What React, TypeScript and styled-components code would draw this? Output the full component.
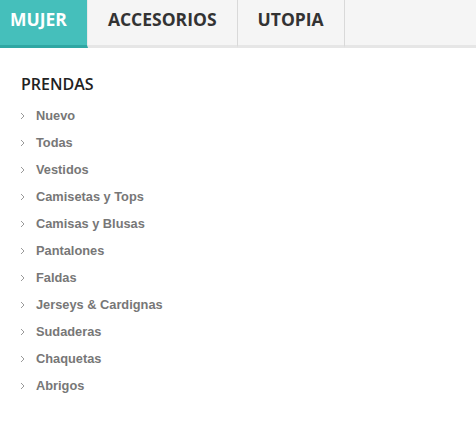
import styled, { createGlobalStyle } from "styled-components";

const GlobalStyle = createGlobalStyle`
  html, body {
    margin: 0;
    padding: 0;
    background: #ffffff;
  }
`;

const tabs = ["MUJER", "ACCESORIOS", "UTOPIA"];

const items = [
  "Nuevo",
  "Todas",
  "Vestidos",
  "Camisetas y Tops",
  "Camisas y Blusas",
  "Pantalones",
  "Faldas",
  "Jerseys & Cardignas",
  "Sudaderas",
  "Chaquetas",
  "Abrigos",
];

const App = () => {
  return (
    <>
      <GlobalStyle />
      <TabBar>
        {tabs.map((t, i) => (
          <Tab key={t} active={i === 0} first={i === 0}>
            {t}
          </Tab>
        ))}
      </TabBar>
      <Menu>
        <Heading>PRENDAS</Heading>
        <List>
          {items.map((item) => (
            <Item key={item}>
              <Chevron width="6" height="8" viewBox="0 0 6 8">
                <path d="M1 1l3 3-3 3" fill="none" stroke="#9a9a9a" strokeWidth="1" />
              </Chevron>
              <ItemLabel>{item}</ItemLabel>
            </Item>
          ))}
        </List>
      </Menu>
    </>
  );
};

export default App;

const TabBar = styled.div`
  display: flex;
  height: 45px;
  background: #f5f5f5;
  border-bottom: 3px solid #e6e6e6;
`;

const Tab = styled.div<{ active: boolean; first: boolean }>`
  display: flex;
  align-items: center;
  box-sizing: border-box;
  height: 48px;
  margin-bottom: -3px;
  padding: ${({ first }) => (first ? "0 20px 8px 10px" : "0 20px 8px")};
  font-family: "Open Sans", "Liberation Sans", sans-serif;
  font-weight: 700;
  font-size: 17.5px;
  color: ${({ active }) => (active ? "#ffffff" : "#333333")};
  background: ${({ active }) => (active ? "#45bfbb" : "transparent")};
  border-right: 1px solid ${({ active }) => (active ? "#e9e9e9" : "#d9d9d9")};
  border-bottom: 3px solid ${({ active }) => (active ? "#2fa7a3" : "#e6e6e6")};
`;

const Menu = styled.div`
  padding: 25px 0 0 21px;
`;

const Heading = styled.div`
  font-family: "Open Sans", "Liberation Sans", sans-serif;
  font-weight: 600;
  font-size: 16px;
  color: #222222;
  line-height: 22px;
  margin-bottom: 7px;
`;

const List = styled.ul`
  list-style: none;
  margin: 0;
  padding: 0;
`;

const Item = styled.li`
  display: flex;
  align-items: center;
  height: 27px;
`;

const Chevron = styled.svg`
  width: 6px;
  height: 8px;
  margin-right: 10px;
  margin-left: -1px;
`;

const ItemLabel = styled.span`
  font-family: "Liberation Sans", Arial, sans-serif;
  font-weight: 700;
  font-size: 12.8px;
  color: #777777;
`;
